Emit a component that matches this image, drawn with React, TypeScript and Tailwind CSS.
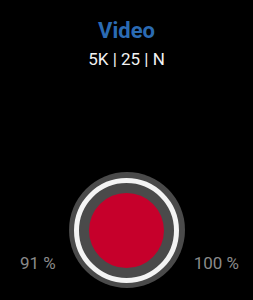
import React from "react";

export default function App() {
  return (
    <div
      className="w-[253px] h-[300px] bg-black flex flex-col items-center overflow-hidden"
      style={{ fontFamily: "Roboto, 'Noto Sans', sans-serif" }}
    >
      <div className="mt-[20px] text-[22px] leading-[22px] font-bold text-[#2b6bb3]">Video</div>
      <div className="mt-[9px] text-[17px] leading-[17px] text-[#f2f2f2]">5K | 25 | N</div>
      <div className="flex-1" />
      <div className="w-full grid grid-cols-[1fr_auto_1fr] items-end pb-3">
        <div className="pl-5 mb-4 text-[17px] leading-[17px] text-[#8a8a8a]">91 %</div>
        <div className="w-[116px] h-[116px] rounded-full bg-[#4a4a4a] flex items-center justify-center">
          <div className="w-[105px] h-[105px] rounded-full border-[5px] border-[#f4f4f4] flex items-center justify-center">
            <div className="w-[75px] h-[75px] rounded-full bg-[#c6002b]" />
          </div>
        </div>
        <div className="justify-self-end pr-[14px] mb-4 text-[17px] leading-[17px] text-[#8a8a8a]">100 %</div>
      </div>
    </div>
  );
}
